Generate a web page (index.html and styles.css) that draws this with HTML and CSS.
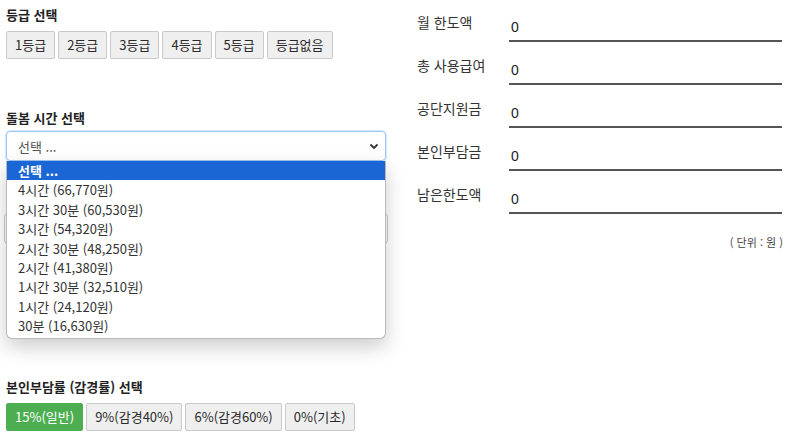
FILE: index.html
```html
<!DOCTYPE html>
<html lang="ko">
<head>
<meta charset="utf-8">
<link rel="stylesheet" href="styles.css">
</head>
<body>
<div class="page">
  <div class="left">
    <div class="label">등급 선택</div>
    <div class="btn-row">
      <button class="btn">1등급</button>
      <button class="btn">2등급</button>
      <button class="btn">3등급</button>
      <button class="btn">4등급</button>
      <button class="btn">5등급</button>
      <button class="btn">등급없음</button>
    </div>
    <div class="label label-time">돌봄 시간 선택</div>
    <div class="select-wrap">
      <div class="select">
        <span>선택 ...</span>
        <svg class="chev" width="10" height="7" viewBox="0 0 10 7"><path d="M1.5 1.5 L5 5 L8.5 1.5" fill="none" stroke="#333" stroke-width="1.8"/></svg>
      </div>
      <div class="hidden-box"></div>
      <ul class="dropdown">
        <li class="sel">선택 ...</li>
        <li>4시간 (66,770원)</li>
        <li>3시간 30분 (60,530원)</li>
        <li>3시간 (54,320원)</li>
        <li>2시간 30분 (48,250원)</li>
        <li>2시간 (41,380원)</li>
        <li>1시간 30분 (32,510원)</li>
        <li>1시간 (24,120원)</li>
        <li>30분 (16,630원)</li>
      </ul>
    </div>
    <div class="label label-rate">본인부담률 (감경률) 선택</div>
    <div class="btn-row">
      <button class="btn btn-green">15%(일반)</button>
      <button class="btn">9%(감경40%)</button>
      <button class="btn">6%(감경60%)</button>
      <button class="btn">0%(기초)</button>
    </div>
  </div>
  <div class="right">
    <div class="row"><div class="rlabel">월 한도액</div><div class="rval">0</div></div>
    <div class="row"><div class="rlabel">총 사용급여</div><div class="rval">0</div></div>
    <div class="row"><div class="rlabel">공단지원금</div><div class="rval">0</div></div>
    <div class="row"><div class="rlabel">본인부담금</div><div class="rval">0</div></div>
    <div class="row"><div class="rlabel">남은한도액</div><div class="rval">0</div></div>
    <div class="unit">( 단위 : 원 )</div>
  </div>
</div>
</body>
</html>
```

FILE: styles.css
```css
* { box-sizing: border-box; }
html, body { margin: 0; padding: 0; background: #fff; }
body {
  font-family: "Noto Sans CJK KR", "Noto Sans", sans-serif;
  color: #333;
  width: 800px;
  height: 436px;
  overflow: hidden;
}
.page {
  display: flex;
  padding: 6px 0 0 6px;
}
.left {
  width: 380px;
  display: flex;
  flex-direction: column;
}
.label {
  font-size: 13px;
  font-weight: bold;
  line-height: 18px;
  color: #222;
}
.btn-row {
  display: flex;
  gap: 3px;
  margin-top: 7px;
}
.btn {
  font-family: "Noto Sans CJK KR", sans-serif;
  font-size: 13px;
  height: 28px;
  padding: 0 8px;
  background: #efefef;
  border: 1px solid #c9c9c9;
  border-radius: 2px;
  color: #2a2a2a;
  line-height: 26px;
}
.btn-green {
  background: #4cae50;
  border-color: #4cae50;
  color: #fff;
}
.label-time { margin-top: 50px; }
.select-wrap {
  position: relative;
  margin-top: 4px;
  height: 247px;
}
.select {
  height: 30px;
  border: 1px solid #9cc8f2;
  border-radius: 4px;
  display: flex;
  align-items: center;
  justify-content: space-between;
  padding: 0 6px 0 11px;
  font-size: 13px;
  color: #555;
  box-shadow: 0 0 0 1px #d8e9fa;
}
.chev { display: block; }
.hidden-box {
  margin: 52px -2px 0 -2px;
  height: 31px;
  border: 1px solid #ccc;
  border-radius: 4px;
}
.dropdown {
  position: absolute;
  left: 0;
  top: 30px;
  width: 380px;
  margin: 0;
  padding: 0 0 2px 0;
  list-style: none;
  background: #fff;
  border: 1px solid #b9b9b9;
  border-top: none;
  border-radius: 0 0 6px 6px;
  box-shadow: 0 8px 20px rgba(0,0,0,0.2);
  font-size: 13px;
}
.dropdown li {
  height: 19.4px;
  line-height: 19.4px;
  padding-left: 11px;
  color: #333;
}
.dropdown li.sel {
  background: #1a66d4;
  color: #fff;
  font-weight: bold;
}
.label-rate { margin-top: 0; }
.right {
  margin-left: 31px;
  width: 366px;
  display: flex;
  flex-direction: column;
}
.row {
  display: flex;
  height: 43px;
}
.rlabel {
  width: 92px;
  font-size: 14px;
  line-height: 20px;
  padding-top: 6px;
  color: #333;
}
.rval {
  width: 273px;
  font-family: "Liberation Sans", "Noto Sans CJK KR", sans-serif;
  font-size: 14px;
  line-height: 20px;
  padding: 11px 0 0 2px;
  border-bottom: 2px solid #555;
  height: 36px;
  color: #222;
}
.unit {
  font-size: 11px;
  text-align: right;
  width: 366px;
  margin-top: 13px;
  color: #444;
}
```
